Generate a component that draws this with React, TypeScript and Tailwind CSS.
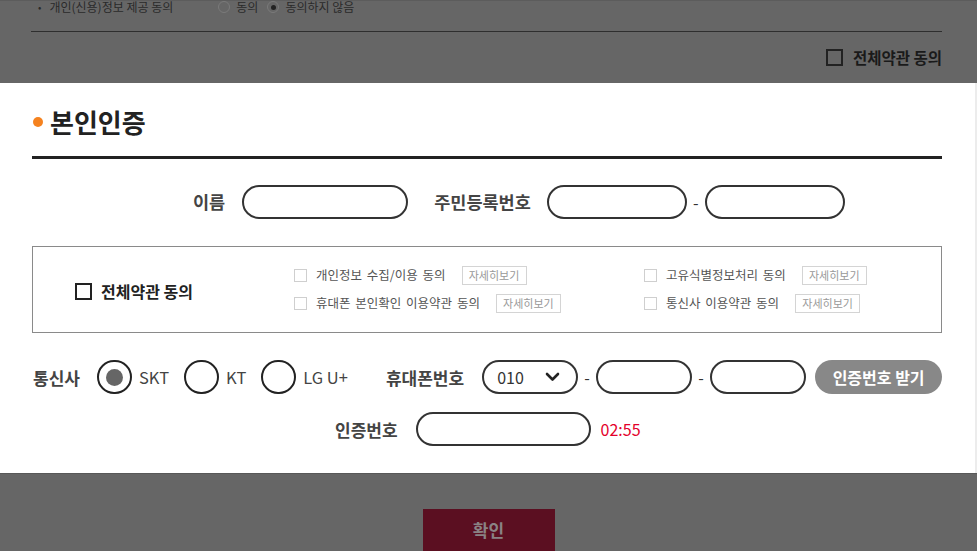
import React from "react";

const FONT = { fontFamily: "'Noto Sans CJK KR', 'Noto Sans', sans-serif" };

function Pill({ w }: { w: number }) {
  return (
    <div
      className="h-[34px] rounded-full border-2 border-[#333] bg-white shrink-0"
      style={{ width: w }}
    />
  );
}

function Dash() {
  return (
    <span className="w-[18px] shrink-0 text-center text-[16px] leading-none text-[#333]">-</span>
  );
}

function SmallItem({ text, btnMl = 16 }: { text: string; btnMl?: number }) {
  return (
    <div className="flex h-[20px] items-center">
      <span className="h-[13px] w-[13px] shrink-0 border border-[#cfcfcf] bg-white" />
      <span className="ml-[9px] text-[12.5px] leading-none text-[#555] [word-spacing:2px] whitespace-nowrap">
        {text}
      </span>
      <span
        className="flex h-[19px] w-[65px] shrink-0 items-center justify-center border border-[#d4d4d4] text-[11px] leading-none text-[#999]"
        style={{ marginLeft: btnMl }}
      >
        자세히보기
      </span>
    </div>
  );
}

function Radio({ checked, label }: { checked?: boolean; label: string }) {
  return (
    <div className="flex items-center">
      <span className="flex h-[34px] w-[35px] shrink-0 items-center justify-center rounded-full border-2 border-[#222] bg-white">
        {checked && <span className="h-[17px] w-[17px] rounded-full bg-[#666]" />}
      </span>
      <span className="ml-[7px] text-[16.5px] leading-none text-[#444] whitespace-nowrap">{label}</span>
    </div>
  );
}

export default function App() {
  return (
    <div className="flex h-[551px] w-[977px] flex-col overflow-hidden bg-[#666]" style={FONT}>
      {/* dimmed page top */}
      <div className="h-[83px] shrink-0 overflow-hidden border-t border-[#5c5c5c] px-[31px]">
        <div className="-mt-[1px] flex h-[14px] items-center text-[12px] leading-none text-[#2a2a2a]">
          <span className="ml-[7px] text-[10px]">•</span>
          <span className="ml-[8px]">개인(신용)정보 제공 동의</span>
          <span className="ml-[45px] h-[12px] w-[12px] rounded-full border border-[#7a7a7a]" />
          <span className="ml-[6px]">동의</span>
          <span className="ml-[9px] flex h-[12px] w-[12px] items-center justify-center rounded-full border border-[#7a7a7a]">
            <span className="h-[5px] w-[5px] rounded-full bg-[#222]" />
          </span>
          <span className="ml-[6px]">동의하지 않음</span>
        </div>
        <div className="mt-[17px] h-px w-[911px] bg-[#2e2e2e]" />
        <div className="mt-[17px] flex h-[17px] w-[911px] items-center justify-end">
          <span className="h-[17px] w-[17px] border-2 border-[#222]" />
          <span className="ml-[10px] text-[15.5px] font-bold leading-none text-[#1a1a1a]">전체약관 동의</span>
        </div>
      </div>

      {/* modal */}
      <div className="shrink-0 border-r-2 border-[#ececec] bg-white px-[32px] pt-[19px] pb-[27px]">
        <div className="flex h-[40px] items-center">
          <span className="ml-[1px] h-[10px] w-[10px] rounded-full bg-[#f5821f]" />
          <span className="ml-[7px] text-[26px] font-bold leading-none text-[#222]">본인인증</span>
        </div>
        <div className="mt-[14px] h-[3px] w-[910px] bg-[#222]" />

        {/* name row */}
        <div className="mt-[26px] flex h-[34px] items-center pl-[161px]">
          <span className="text-[17.5px] font-bold leading-none text-[#444]">이름</span>
          <div className="ml-[17px]">
            <Pill w={166} />
          </div>
          <span className="ml-[26px] text-[17.5px] font-bold leading-none text-[#444]">주민등록번호</span>
          <div className="ml-[16px] flex items-center">
            <Pill w={140} />
            <Dash />
            <Pill w={140} />
          </div>
        </div>

        {/* agreement box */}
        <div className="mt-[27px] flex h-[87px] w-[910px] items-center border border-[#8a8a8a]">
          <div className="flex w-[261px] shrink-0 items-center pl-[42px] pt-[3px]">
            <span className="h-[17px] w-[17px] border-2 border-[#222]" />
            <span className="ml-[9px] text-[16px] font-bold leading-none text-[#222]">전체약관 동의</span>
          </div>
          <div className="grid grid-cols-[350px_1fr] gap-y-[8px]">
            <SmallItem text="개인정보 수집/이용 동의" />
            <SmallItem text="고유식별정보처리 동의" />
            <SmallItem text="휴대폰 본인확인 이용약관 동의" />
            <SmallItem text="통신사 이용약관 동의" />
          </div>
        </div>

        {/* carrier row */}
        <div className="mt-[27px] flex h-[34px] items-center">
          <span className="ml-[1px] w-[48px] text-[17px] font-bold leading-none text-[#444] whitespace-nowrap">통신사</span>
          <div className="ml-[16px]">
            <Radio checked label="SKT" />
          </div>
          <div className="ml-[15px]">
            <Radio label="KT" />
          </div>
          <div className="ml-[15px]">
            <Radio label="LG U+" />
          </div>
          <span className="ml-[38px] text-[17px] font-bold leading-none text-[#444]">휴대폰번호</span>
          <div className="ml-[18px] flex items-center">
            <div className="flex h-[34px] w-[96px] items-center justify-between rounded-full border-2 border-[#333] bg-white pl-[13px] pr-[16px]">
              <span className="text-[16px] leading-none text-[#333]">010</span>
              <svg width="15" height="10" viewBox="0 0 15 10">
                <path d="M2 2 L7.5 7.5 L13 2" fill="none" stroke="#222" strokeWidth="2.6" strokeLinecap="round" strokeLinejoin="round" />
              </svg>
            </div>
            <Dash />
            <Pill w={96} />
            <Dash />
            <Pill w={96} />
          </div>
          <div className="ml-[9px] flex h-[34px] w-[127px] items-center justify-center rounded-full bg-[#888]">
            <span className="text-[16px] font-bold leading-none text-white">인증번호 받기</span>
          </div>
        </div>

        {/* auth number row */}
        <div className="mt-[18px] flex h-[34px] items-center pl-[303px]">
          <span className="text-[17px] font-bold leading-none text-[#444]">인증번호</span>
          <div className="ml-[18px]">
            <Pill w={175} />
          </div>
          <span className="ml-[10px] text-[16px] leading-none text-[#e4002b]">02:55</span>
        </div>
      </div>

      {/* dimmed page bottom */}
      <div className="flex-1 overflow-hidden border-t border-[#585858] px-[32px] pt-[35px]">
        <div className="mx-auto flex h-[50px] w-[132px] items-start justify-center bg-[#5b0f21] pt-[12px]">
          <span className="text-[17px] font-bold leading-none text-[#8a8284]">확인</span>
        </div>
      </div>
    </div>
  );
}
